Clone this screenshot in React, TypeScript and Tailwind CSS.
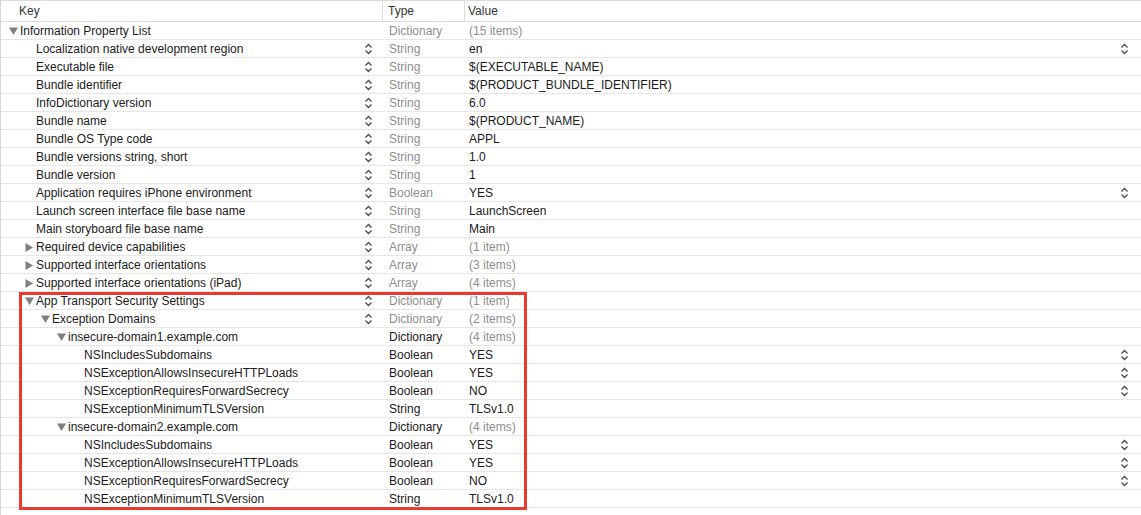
import React from 'react'

type Row = {
  key: string
  level: number
  tri?: 'down' | 'right'
  type: string
  value: string
  keyStep?: boolean
  valStep?: boolean
  typeDark?: boolean
  valueGray?: boolean
}

const rows: Row[] = [
  { key: 'Information Property List', level: 0, tri: 'down', type: 'Dictionary', value: '(15 items)', valueGray: true },
  { key: 'Localization native development region', level: 1, type: 'String', value: 'en', keyStep: true, valStep: true },
  { key: 'Executable file', level: 1, type: 'String', value: '$(EXECUTABLE_NAME)', keyStep: true },
  { key: 'Bundle identifier', level: 1, type: 'String', value: '$(PRODUCT_BUNDLE_IDENTIFIER)', keyStep: true },
  { key: 'InfoDictionary version', level: 1, type: 'String', value: '6.0', keyStep: true },
  { key: 'Bundle name', level: 1, type: 'String', value: '$(PRODUCT_NAME)', keyStep: true },
  { key: 'Bundle OS Type code', level: 1, type: 'String', value: 'APPL', keyStep: true },
  { key: 'Bundle versions string, short', level: 1, type: 'String', value: '1.0', keyStep: true },
  { key: 'Bundle version', level: 1, type: 'String', value: '1', keyStep: true },
  { key: 'Application requires iPhone environment', level: 1, type: 'Boolean', value: 'YES', keyStep: true, valStep: true },
  { key: 'Launch screen interface file base name', level: 1, type: 'String', value: 'LaunchScreen', keyStep: true },
  { key: 'Main storyboard file base name', level: 1, type: 'String', value: 'Main', keyStep: true },
  { key: 'Required device capabilities', level: 1, tri: 'right', type: 'Array', value: '(1 item)', keyStep: true, valueGray: true },
  { key: 'Supported interface orientations', level: 1, tri: 'right', type: 'Array', value: '(3 items)', keyStep: true, valueGray: true },
  { key: 'Supported interface orientations (iPad)', level: 1, tri: 'right', type: 'Array', value: '(4 items)', keyStep: true, valueGray: true },
  { key: 'App Transport Security Settings', level: 1, tri: 'down', type: 'Dictionary', value: '(1 item)', keyStep: true, valueGray: true },
  { key: 'Exception Domains', level: 2, tri: 'down', type: 'Dictionary', value: '(2 items)', keyStep: true, valueGray: true },
  { key: 'insecure-domain1.example.com', level: 3, tri: 'down', type: 'Dictionary', value: '(4 items)', typeDark: true, valueGray: true },
  { key: 'NSIncludesSubdomains', level: 4, type: 'Boolean', value: 'YES', typeDark: true, valStep: true },
  { key: 'NSExceptionAllowsInsecureHTTPLoads', level: 4, type: 'Boolean', value: 'YES', typeDark: true, valStep: true },
  { key: 'NSExceptionRequiresForwardSecrecy', level: 4, type: 'Boolean', value: 'NO', typeDark: true, valStep: true },
  { key: 'NSExceptionMinimumTLSVersion', level: 4, type: 'String', value: 'TLSv1.0', typeDark: true },
  { key: 'insecure-domain2.example.com', level: 3, tri: 'down', type: 'Dictionary', value: '(4 items)', typeDark: true, valueGray: true },
  { key: 'NSIncludesSubdomains', level: 4, type: 'Boolean', value: 'YES', typeDark: true, valStep: true },
  { key: 'NSExceptionAllowsInsecureHTTPLoads', level: 4, type: 'Boolean', value: 'YES', typeDark: true, valStep: true },
  { key: 'NSExceptionRequiresForwardSecrecy', level: 4, type: 'Boolean', value: 'NO', typeDark: true, valStep: true },
  { key: 'NSExceptionMinimumTLSVersion', level: 4, type: 'String', value: 'TLSv1.0', typeDark: true },
]

// padding when a disclosure triangle precedes the text / when it does not
const triPad = ['pl-[8px]', 'pl-[24px]', 'pl-[40px]', 'pl-[56px]', 'pl-[72px]']
const leafPad = ['pl-[19px]', 'pl-[35px]', 'pl-[51px]', 'pl-[67px]', 'pl-[83px]']

function Stepper() {
  return (
    <svg width="9" height="12" viewBox="0 0 9 12" className="shrink-0">
      <path d="M1.5 4.5 L4.5 1.5 L7.5 4.5" fill="none" stroke="#4a4a4a" strokeWidth="1.3" />
      <path d="M1.5 7.5 L4.5 10.5 L7.5 7.5" fill="none" stroke="#4a4a4a" strokeWidth="1.3" />
    </svg>
  )
}

function Triangle({ dir }: { dir: 'down' | 'right' }) {
  return (
    <span className="w-[11px] shrink-0 flex items-center">
      {dir === 'down' ? (
        <svg width="9" height="8" viewBox="0 0 9 8">
          <path d="M0 0.5 H9 L4.5 8 Z" fill="#808080" />
        </svg>
      ) : (
        <svg width="8" height="9" viewBox="0 0 8 9">
          <path d="M0.5 0 V9 L8 4.5 Z" fill="#808080" />
        </svg>
      )}
    </span>
  )
}

export default function App() {
  return (
    <div
      className="relative w-[1141px] h-[515px] bg-white border-l border-[#d6d6d6] overflow-hidden text-[12px] text-[#1a1a1a]"
      style={{ fontFamily: '"Liberation Sans", Arial, sans-serif' }}
    >
      {/* Header */}
      <div className="grid grid-cols-[382px_82px_1fr] h-[22px] border-t border-b border-[#dadada] text-[#333]">
        <div className="pl-[18px] flex items-center border-r border-[#dadada]">Key</div>
        <div className="pl-[5px] flex items-center border-r border-[#dadada]">Type</div>
        <div className="pl-[3px] flex items-center">Value</div>
      </div>

      {/* Rows */}
      {rows.map((r, i) => (
        <div key={i} className="grid grid-cols-[382px_82px_1fr] h-[18px] border-b border-[#e6e6e6]">
          <div className={`flex items-center pr-[10px] ${r.tri ? triPad[r.level] : leafPad[r.level]}`}>
            {r.tri && <Triangle dir={r.tri} />}
            <span className="flex-1 truncate">{r.key}</span>
            {r.keyStep && <Stepper />}
          </div>
          <div className={`flex items-center pl-[6px] ${r.typeDark ? 'text-[#1a1a1a]' : 'text-[#8e8e8e]'}`}>
            {r.type}
          </div>
          <div className="flex items-center pl-[4px] pr-[12px]">
            <span className={`flex-1 ${r.valueGray ? 'text-[#8e8e8e]' : ''}`}>{r.value}</span>
            {r.valStep && <Stepper />}
          </div>
        </div>
      ))}

      {/* Highlight annotation */}
      <div className="absolute left-[18px] top-[292px] w-[508px] h-[218px] border-[3px] border-[#ea3a2e] pointer-events-none" />
    </div>
  )
}
